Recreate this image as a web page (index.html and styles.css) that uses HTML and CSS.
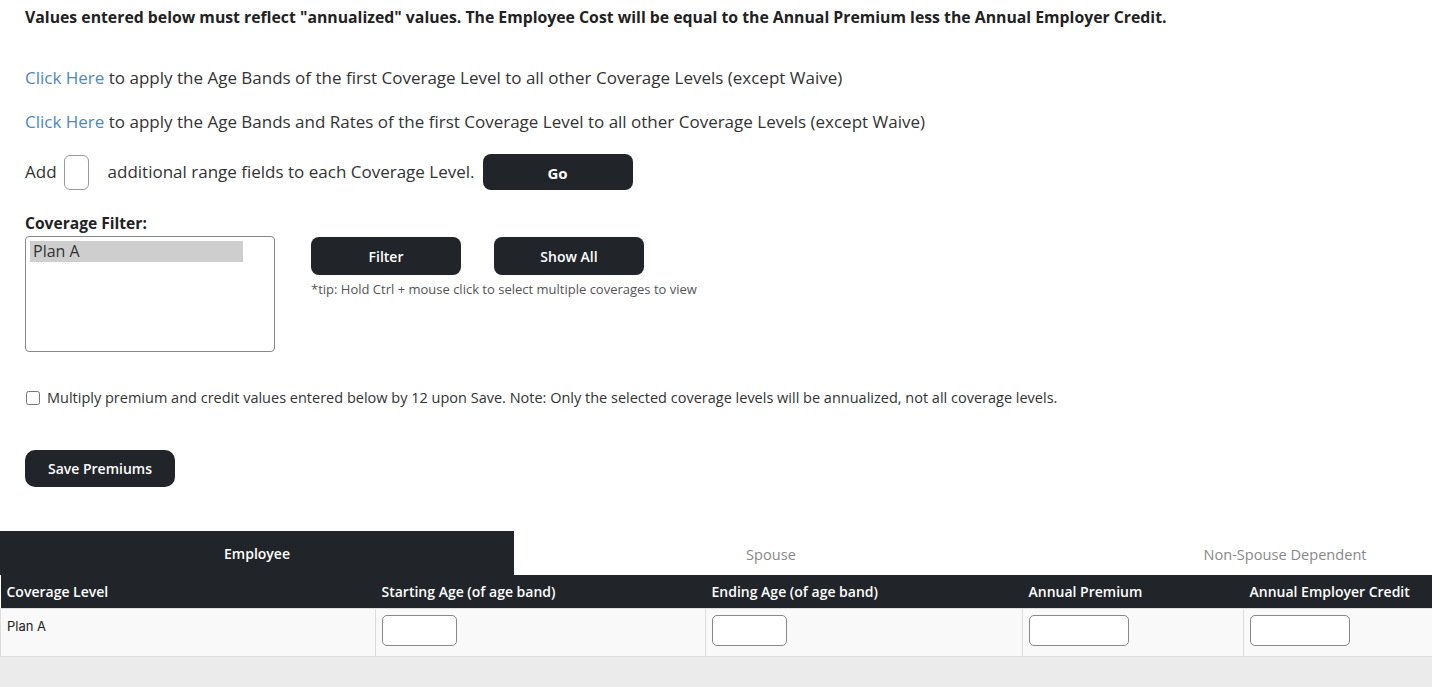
FILE: index.html
```html
<!DOCTYPE html>
<html lang="en">
<head>
    <meta charset="UTF-8">
    <title>Premiums</title>
    <link rel="stylesheet" href="styles.css">
</head>
<body>
<div class="page">
    <p class="notice">Values entered below must reflect "annualized" values. The Employee Cost will be equal to the Annual Premium less the Annual Employer Credit.</p>

    <p class="apply-line first"><a href="#">Click Here</a> to apply the Age Bands of the first Coverage Level to all other Coverage Levels (except Waive)</p>
    <p class="apply-line"><a href="#">Click Here</a> to apply the Age Bands and Rates of the first Coverage Level to all other Coverage Levels (except Waive)</p>

    <div class="add-row">
        <span>Add</span>
        <input type="text" class="range-count">
        <span class="add-text">additional range fields to each Coverage Level.</span>
        <button class="btn btn-go">Go</button>
    </div>

    <div class="filter-section">
        <label class="filter-label" for="coverage">Coverage Filter:</label>
        <div class="filter-row">
            <div class="coverage-list" id="coverage">
                <div class="coverage-option">Plan A</div>
            </div>
            <div class="filter-actions">
                <div class="filter-buttons">
                    <button class="btn btn-filter">Filter</button>
                    <button class="btn btn-filter">Show All</button>
                </div>
                <p class="tip">*tip: Hold Ctrl + mouse click to select multiple coverages to view</p>
            </div>
        </div>
    </div>

    <label class="multiply-row">
        <input type="checkbox">
        <span>Multiply premium and credit values entered below by 12 upon Save. Note: Only the selected coverage levels will be annualized, not all coverage levels.</span>
    </label>

    <button class="btn btn-save">Save Premiums</button>
</div>

<div class="premium-area">
    <div class="premium-inner">
        <div class="tabs">
            <div class="tab active">Employee</div>
            <div class="tab">Spouse</div>
            <div class="tab">Non-Spouse Dependent</div>
        </div>
        <table class="premium-table">
            <colgroup>
                <col class="c1"><col class="c2"><col class="c3"><col class="c4"><col class="c5">
            </colgroup>
            <thead>
                <tr>
                    <th>Coverage Level</th>
                    <th>Starting Age (of age band)</th>
                    <th>Ending Age (of age band)</th>
                    <th>Annual Premium</th>
                    <th>Annual Employer Credit</th>
                </tr>
            </thead>
            <tbody>
                <tr>
                    <td class="plan-name">Plan A</td>
                    <td><input type="text" class="age-input"></td>
                    <td><input type="text" class="age-input"></td>
                    <td><input type="text" class="money-input"></td>
                    <td><input type="text" class="money-input"></td>
                </tr>
            </tbody>
        </table>
    </div>
    <div class="table-footer"></div>
</div>
</body>
</html>
```

FILE: styles.css
```css
body {
    margin: 0;
    font-family: 'Open Sans', sans-serif;
    font-size: 16px;
    color: #333;
    background-color: #fff;
}

.page {
    padding: 5px 25px 0;
}

.notice {
    margin: 0;
    line-height: 24px;
    font-size: 15.8px;
    font-weight: bold;
    color: #222;
}

.apply-line {
    margin: 20px 0 0;
    line-height: 24px;
    font-size: 17px;
}

.apply-line.first {
    margin-top: 37px;
}

.apply-line a {
    color: #4a8ac2;
    text-decoration: none;
}

.add-row {
    display: flex;
    align-items: center;
    margin-top: 20px;
    font-size: 17px;
    line-height: 24px;
}

.range-count {
    width: 25px;
    height: 35px;
    box-sizing: border-box;
    margin: 0 19px 0 7px;
    border: 1px solid #999;
    border-radius: 6px;
}

.add-text {
    margin-right: 8px;
}

.btn {
    background-color: #212529;
    color: #fff;
    border: none;
    border-radius: 8px;
    width: 150px;
    font-family: 'Open Sans', sans-serif;
    font-size: 14px;
    font-weight: 600;
    cursor: pointer;
}

.btn-go {
    height: 36px;
    font-size: 15px;
    font-weight: bold;
    padding-top: 2px;
}

.filter-section {
    margin-top: 23px;
}

.filter-label {
    display: block;
    font-size: 15.6px;
    font-weight: bold;
    line-height: 20px;
    color: #222;
    margin-bottom: 3px;
}

.filter-row {
    display: flex;
    align-items: flex-start;
}

.coverage-list {
    width: 250px;
    height: 116px;
    box-sizing: border-box;
    border: 1px solid #888;
    border-radius: 4px;
    padding: 4px;
}

.coverage-option {
    width: 213px;
    height: 21px;
    line-height: 21px;
    background-color: #cecece;
    padding-left: 3px;
    box-sizing: border-box;
    color: #333;
}

.filter-actions {
    margin-left: 36px;
    padding-top: 1px;
}

.filter-buttons {
    display: flex;
    gap: 33px;
}

.btn-filter {
    height: 38px;
}

.tip {
    margin: 7px 0 0;
    font-size: 13px;
    line-height: 14px;
    color: #555;
}

.multiply-row {
    display: flex;
    align-items: center;
    margin-top: 37px;
    font-size: 14.5px;
    line-height: 18px;
}

.multiply-row input {
    width: 14px;
    height: 14px;
    margin: 0 7px 0 1px;
}

.btn-save {
    display: block;
    height: 37px;
    margin-top: 43px;
    border-radius: 10px;
}

.premium-area {
    margin-top: 44px;
    overflow: hidden;
}

.premium-inner {
    width: 1542px;
}

.tabs {
    display: flex;
}

.tab {
    width: 514px;
    height: 44px;
    line-height: 46px;
    text-align: center;
    font-size: 14.6px;
    color: #888;
}

.tab.active {
    background-color: #212529;
    color: #fff;
    font-size: 14px;
    font-weight: 600;
}

.premium-table {
    width: 1542px;
    table-layout: fixed;
    border-collapse: collapse;
}

.c1 { width: 375px; }
.c2 { width: 330px; }
.c3 { width: 317px; }
.c4 { width: 221px; }
.c5 { width: 299px; }

.premium-table th {
    background-color: #212529;
    color: #fff;
    text-align: left;
    font-size: 14px;
    font-weight: 600;
    height: 33px;
    padding: 0 6px;
}

.premium-table td {
    background-color: #f9f9f9;
    border: 1px solid #ddd;
    height: 48px;
    padding: 6px 6px 0;
    vertical-align: top;
    box-sizing: border-box;
}

.premium-table .plan-name {
    font-family: 'Inter', sans-serif;
    font-size: 13px;
    color: #222;
    padding-top: 9px;
}

.age-input, .money-input {
    height: 31px;
    box-sizing: border-box;
    border: 1px solid #888;
    border-radius: 5px;
    background: #fff;
}

.age-input {
    width: 75px;
}

.money-input {
    width: 100px;
}

.table-footer {
    height: 40px;
    background-color: #ebebeb;
}
```
